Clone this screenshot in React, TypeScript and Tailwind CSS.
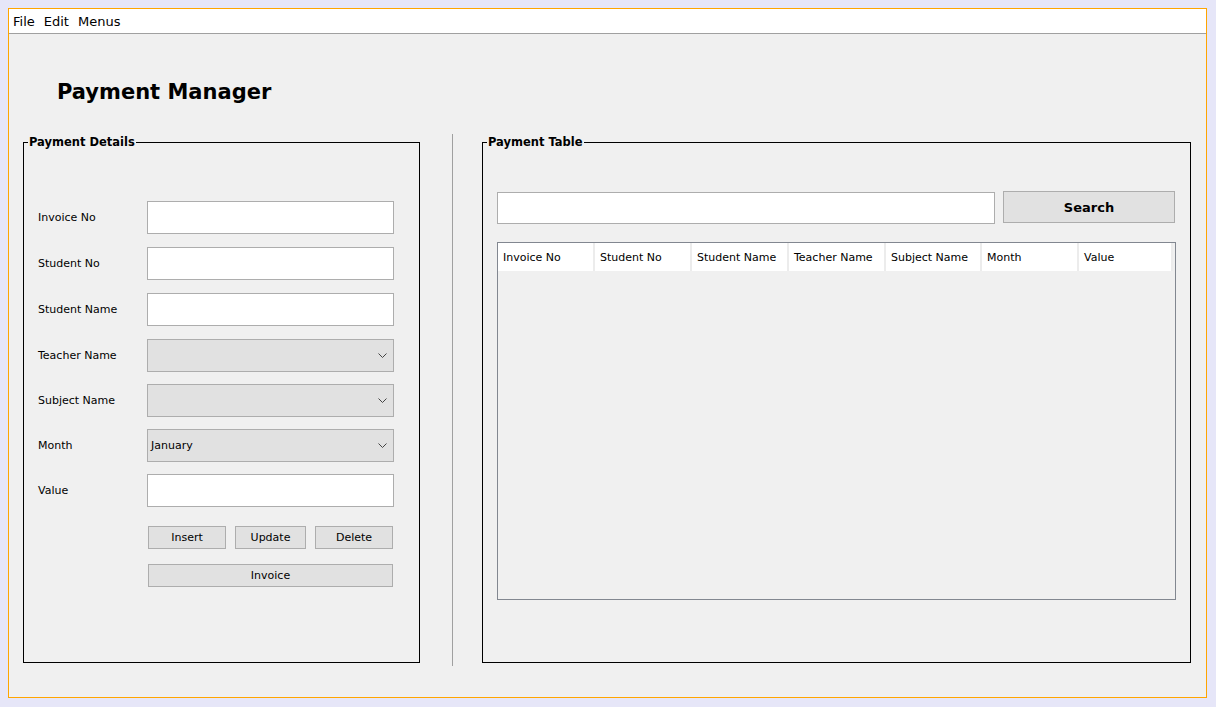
const font = "font-['DejaVu_Sans',sans-serif]";

function Chevron() {
  return (
    <svg width="9" height="5" viewBox="0 0 9 5" className="mr-[6px]">
      <path d="M0.5 0.5 L4.5 4.5 L8.5 0.5" fill="none" stroke="#444" strokeWidth="1" />
    </svg>
  );
}

function TextRow({ label, mt }: { label: string; mt: string }) {
  return (
    <div className={`flex items-center ${mt}`}>
      <span className="w-[109px] pt-[2px] text-[11px] text-black">{label}</span>
      <div className="h-[33px] w-[247px] border border-[#adadad] bg-white" />
    </div>
  );
}

function SelectRow({ label, value, mt }: { label: string; value?: string; mt: string }) {
  return (
    <div className={`flex items-center ${mt}`}>
      <span className="w-[109px] pt-[2px] text-[11px] text-black">{label}</span>
      <div className="flex h-[33px] w-[247px] items-center justify-between border border-[#adadad] bg-[#e1e1e1] pl-[3px]">
        <span className="pt-[2px] text-[11px] text-black">{value ?? ""}</span>
        <Chevron />
      </div>
    </div>
  );
}

const columns = [
  { name: "Invoice No", w: "w-[97px]" },
  { name: "Student No", w: "w-[97px]" },
  { name: "Student Name", w: "w-[97px]" },
  { name: "Teacher Name", w: "w-[97px]" },
  { name: "Subject Name", w: "w-[96px]" },
  { name: "Month", w: "w-[97px]" },
  { name: "Value", w: "w-[94px]" },
];

export default function App() {
  return (
    <div className={`h-[707px] w-[1216px] bg-[#e6e6f8] pl-[8px] pt-[8px] ${font}`}>
      <div className="flex h-[690px] w-[1199px] flex-col border border-[#ffa500] bg-[#f0f0f0]">
        {/* menu bar */}
        <div className="flex h-[25px] items-center gap-[9px] border-b border-[#a0a0a0] bg-white pl-[4px] pt-[2px] text-[13px] text-black">
          <span>File</span>
          <span>Edit</span>
          <span>Menus</span>
        </div>

        <h1 className="ml-[48px] mt-[43px] h-[30px] text-[21px] font-bold leading-[30px] text-black">
          Payment Manager
        </h1>

        <div className="mt-[28px] flex items-start">
          {/* left panel */}
          <fieldset className="ml-[14px] h-[528px] w-[397px] border border-black px-[14px]">
            <legend className="ml-[-10px] px-[1px] text-[11.5px] font-bold leading-[14px] text-black">
              Payment Details
            </legend>
            <TextRow label="Invoice No" mt="mt-[52px]" />
            <TextRow label="Student No" mt="mt-[13px]" />
            <TextRow label="Student Name" mt="mt-[13px]" />
            <SelectRow label="Teacher Name" mt="mt-[13px]" />
            <SelectRow label="Subject Name" mt="mt-[12px]" />
            <SelectRow label="Month" value="January" mt="mt-[12px]" />
            <TextRow label="Value" mt="mt-[12px]" />
            <div className="ml-[110px] mt-[19px] flex w-[245px] flex-col">
              <div className="flex gap-[9px] text-[11px] text-black">
                <button className="h-[23px] w-[78px] border border-[#adadad] bg-[#e1e1e1] pt-[1px]">Insert</button>
                <button className="h-[23px] w-[71px] border border-[#adadad] bg-[#e1e1e1] pt-[1px]">Update</button>
                <button className="h-[23px] w-[78px] border border-[#adadad] bg-[#e1e1e1] pt-[1px]">Delete</button>
              </div>
              <button className="mt-[15px] h-[23px] w-[245px] border border-[#adadad] bg-[#e1e1e1] pt-[1px] text-[11px] text-black">
                Invoice
              </button>
            </div>
          </fieldset>

          {/* separator */}
          <div className="ml-[32px] mt-[-1px] h-[532px] w-[1px] bg-[#a0a0a0]" />

          {/* right panel */}
          <fieldset className="ml-[29px] h-[528px] w-[709px] border border-black px-[14px]">
            <legend className="ml-[-10px] px-[1px] text-[11.5px] font-bold leading-[14px] text-black">
              Payment Table
            </legend>
            <div className="mt-[42px] flex items-start">
              <div className="mt-[1px] h-[32px] w-[498px] border border-[#adadad] bg-white" />
              <button className="ml-[8px] h-[32px] w-[172px] border border-[#adadad] bg-[#e1e1e1] pt-[2px] text-[13px] font-bold text-black">
                Search
              </button>
            </div>
            <div className="mt-[18px] h-[358px] w-[679px] border border-[#828790] bg-[#f0f0f0]">
              <div className="flex h-[28px]">
                {columns.map((c) => (
                  <div
                    key={c.name}
                    className={`${c.w} flex items-center border-r-2 border-[#ececec] bg-white pl-[5px] pt-[3px] text-[11px] text-black`}
                  >
                    {c.name}
                  </div>
                ))}
              </div>
            </div>
          </fieldset>
        </div>
      </div>
    </div>
  );
}
